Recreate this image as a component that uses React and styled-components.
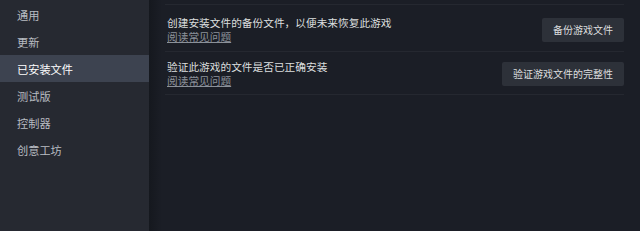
import React, { useState } from "react";
import styled, { createGlobalStyle } from "styled-components";

const GlobalStyle = createGlobalStyle`
  html, body {
    margin: 0;
    padding: 0;
    background: #1b1e26;
  }
  body {
    font-family: "Noto Sans CJK SC", "Noto Sans", sans-serif;
  }
`;

const sections = ["通用", "更新", "已安装文件", "测试版", "控制器", "创意工坊"];

const rows = [
  {
    text: "创建安装文件的备份文件，以便未来恢复此游戏",
    button: "备份游戏文件",
  },
  {
    text: "验证此游戏的文件是否已正确安装",
    button: "验证游戏文件的完整性",
  },
];

function App() {
  const [active, setActive] = useState(2);

  return (
    <>
      <GlobalStyle />
      <Layout>
        <Sidebar>
          {sections.map((s, i) => (
            <NavItem key={s} $active={i === active} onClick={() => setActive(i)}>
              {s}
            </NavItem>
          ))}
        </Sidebar>
        <Main>
          <RowList>
            {rows.map((r, i) => (
              <Row key={r.button} $first={i === 0}>
                <TextBlock>
                  <Description>{r.text}</Description>
                  <FaqLink href="#">阅读常见问题</FaqLink>
                </TextBlock>
                <ActionButton>{r.button}</ActionButton>
              </Row>
            ))}
          </RowList>
        </Main>
      </Layout>
    </>
  );
}

const Layout = styled.div`
  display: flex;
  width: 640px;
  height: 231px;
  overflow: hidden;
`;

const Sidebar = styled.nav`
  width: 149px;
  flex-shrink: 0;
  background: #262931;
  padding-top: 1px;
  display: flex;
  flex-direction: column;
`;

const NavItem = styled.div`
  height: 27px;
  display: flex;
  align-items: center;
  padding-left: 17px;
  font-size: 11.2px;
  color: ${(p) => (p.$active ? "#ffffff" : "#b8bcc2")};
  background: ${(p) => (p.$active ? "#3d4350" : "transparent")};
  cursor: pointer;
`;

const Main = styled.main`
  flex: 1;
  background: linear-gradient(to right, #15181e 0px, #1b1e26 13px);
  padding: 4px 16px 0 16px;
`;

const RowList = styled.div`
  display: flex;
  flex-direction: column;
  border-top: 1px solid #252830;
`;

const Row = styled.div`
  display: flex;
  align-items: center;
  justify-content: space-between;
  padding: ${(p) => (p.$first ? "11px 0 8px 2px" : "8px 0 7px 2px")};
  border-bottom: 1px solid #252830;
`;

const TextBlock = styled.div`
  display: flex;
  flex-direction: column;
`;

const Description = styled.span`
  font-size: 10.7px;
  line-height: 13.5px;
  color: #dcdedf;
`;

const FaqLink = styled.a`
  font-size: 10.7px;
  line-height: 13.5px;
  color: #8b9199;
  text-decoration: underline;
  width: fit-content;
`;

const ActionButton = styled.button`
  height: 24px;
  padding: 0 11px;
  border: none;
  border-radius: 2px;
  background: #2d3139;
  color: #dcdedf;
  font-family: inherit;
  font-size: 10px;
  cursor: pointer;

  &:hover {
    background: #3d4350;
  }
`;

export default App;
